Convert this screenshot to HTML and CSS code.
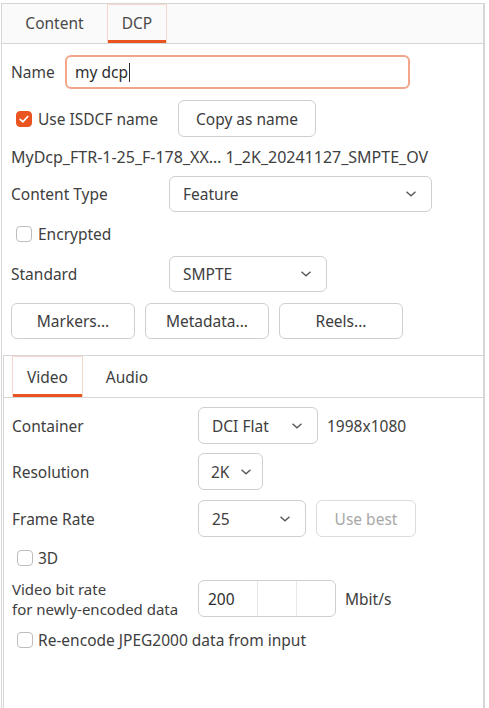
FILE: index.html
```html
<!DOCTYPE html>
<html>
<head>
<meta charset="utf-8">
<link rel="stylesheet" href="styles.css">
</head>
<body>
<div class="window">
  <div class="tabbar">
    <div class="tab t-content">Content</div>
    <div class="tab t-dcp active">DCP</div>
  </div>
  <div class="page">
    <div class="row r-name">
      <span class="label l-name">Name</span>
      <div class="entry focus"><span>my dcp</span><span class="caret"></span></div>
    </div>
    <div class="row r-isdcf">
      <label class="check"><span class="box checked"><svg viewBox="0 0 16 16" width="16" height="16"><path d="M4.2 8.3l2.6 2.6 5-5.4" fill="none" stroke="#fff" stroke-width="1.7" stroke-linecap="round" stroke-linejoin="round"/></svg></span>Use ISDCF name</label>
      <div class="button b-copy">Copy as name</div>
    </div>
    <div class="row r-text">MyDcp_FTR-1-25_F-178_XX… 1_2K_20241127_SMPTE_OV</div>
    <div class="row r-combo">
      <span class="label l-wide">Content Type</span>
      <div class="combo c-type"><span>Feature</span><svg class="chev" viewBox="0 0 12 8" width="12" height="8"><path d="M1.5 1.8l4.5 4 4.5-4" fill="none" stroke="#555" stroke-width="1.3"/></svg></div>
    </div>
    <div class="row r-check">
      <label class="check"><span class="box"></span>Encrypted</label>
    </div>
    <div class="row r-combo r-std">
      <span class="label l-wide">Standard</span>
      <div class="combo c-std"><span>SMPTE</span><svg class="chev" viewBox="0 0 12 8" width="12" height="8"><path d="M1.5 1.8l4.5 4 4.5-4" fill="none" stroke="#555" stroke-width="1.3"/></svg></div>
    </div>
    <div class="row r-buttons">
      <div class="button b-wide">Markers...</div>
      <div class="button b-wide">Metadata...</div>
      <div class="button b-wide">Reels...</div>
    </div>
  </div>
  <div class="notebook">
    <div class="tabbar2">
      <div class="tab2 t-video active">Video</div>
      <div class="tab2 t-audio">Audio</div>
    </div>
    <div class="page2">
      <div class="row r-c2">
        <span class="label l-in">Container</span>
        <div class="combo c-flat"><span>DCI Flat</span><svg class="chev" viewBox="0 0 12 8" width="12" height="8"><path d="M1.5 1.8l4.5 4 4.5-4" fill="none" stroke="#555" stroke-width="1.3"/></svg></div>
        <span class="after">1998x1080</span>
      </div>
      <div class="row r-c2 r-res">
        <span class="label l-in">Resolution</span>
        <div class="combo c-2k"><span>2K</span><svg class="chev" viewBox="0 0 12 8" width="12" height="8"><path d="M1.5 1.8l4.5 4 4.5-4" fill="none" stroke="#555" stroke-width="1.3"/></svg></div>
      </div>
      <div class="row r-c2 r-fr">
        <span class="label l-in">Frame Rate</span>
        <div class="combo c-25"><span>25</span><svg class="chev" viewBox="0 0 12 8" width="12" height="8"><path d="M1.5 1.8l4.5 4 4.5-4" fill="none" stroke="#555" stroke-width="1.3"/></svg></div>
        <div class="button b-best disabled">Use best</div>
      </div>
      <div class="row r-check2">
        <label class="check"><span class="box"></span>3D</label>
      </div>
      <div class="row r-bit">
        <span class="label l-in two"><span class="line">Video bit rate</span><span class="line">for newly-encoded data</span></span>
        <div class="spin"><span class="spin-text">200</span><span class="spin-btn"></span><span class="spin-btn"></span></div>
        <span class="after">Mbit/s</span>
      </div>
      <div class="row r-check3">
        <label class="check"><span class="box"></span>Re-encode JPEG2000 data from input</label>
      </div>
    </div>
  </div>
</div>
</body>
</html>
```

FILE: styles.css
```css
html, body {
  margin: 0;
  padding: 0;
  background: #ffffff;
}
body {
  font-family: "Noto Sans", "Open Sans", sans-serif;
  font-size: 15.5px;
  color: #404040;
}
.window {
  margin-top: 3px;
  margin-left: 1px;
  width: 481px;
  height: 705px;
  border-top: 1px solid #d6d6d6;
  border-left: 1px solid #d6d6d6;
  border-right: 2px solid #d6d6d6;
  display: flex;
  flex-direction: column;
}
.tabbar {
  height: 39px;
  background: #fafafa;
  border-bottom: 1px solid #d6d6d6;
  display: flex;
}
.tab {
  box-sizing: border-box;
  display: flex;
  align-items: center;
  justify-content: center;
  padding-bottom: 2px;
  color: #4a4a4a;
  border: 1px solid transparent;
  border-bottom: none;
}
.t-content { width: 105px; }
.t-dcp { width: 60px; }
.tab.active {
  border-color: #f8d8cc;
  box-shadow: inset 0 -3px 0 #e95420;
  background: #fafafa;
}
.page {
  padding: 11px 0 0 9px;
  display: flex;
  flex-direction: column;
}
.row {
  display: flex;
  align-items: center;
}
.label { flex: none; }
.l-name { width: 54px; }
.l-wide { width: 158px; }
.r-name { height: 34px; }
.entry {
  box-sizing: border-box;
  width: 345px;
  height: 34px;
  border: 2px solid #f4a68a;
  border-radius: 6px;
  display: flex;
  align-items: center;
  padding-left: 8px;
  color: #2e2e2e;
}
.caret {
  display: inline-block;
  width: 1px;
  height: 19px;
  background: #2e2e2e;
  margin-left: 1px;
}
.r-isdcf { height: 37px; margin-top: 11px; }
.check {
  display: flex;
  align-items: center;
  gap: 6px;
  margin-left: 5px;
}
.box {
  box-sizing: border-box;
  width: 16px;
  height: 16px;
  border: 1px solid #bdbdbd;
  border-radius: 4px;
  background: #fff;
  display: flex;
  align-items: center;
  justify-content: center;
}
.box svg { flex: none; }
.box.checked {
  background: #e95420;
  border-color: #e95420;
}
.button {
  box-sizing: border-box;
  height: 37px;
  border: 1px solid #cfcfcf;
  border-radius: 6px;
  background: #fff;
  display: flex;
  align-items: center;
  justify-content: center;
  color: #3d3d3d;
}
.b-copy { width: 138px; margin-left: 20px; }
.r-text { height: 22px; margin-top: 9px; font-size: 16px; letter-spacing: 0; }
.r-combo { height: 36px; margin-top: 8px; }
.combo {
  box-sizing: border-box;
  height: 36px;
  border: 1px solid #cfcfcf;
  border-radius: 6px;
  background: #fff;
  display: flex;
  align-items: center;
  justify-content: space-between;
  padding: 0 14px 0 13px;
}
.c-type { width: 263px; }
.c-std { width: 158px; }
.r-check { height: 24px; margin-top: 10px; }
.r-std { margin-top: 10px; }
.r-buttons { height: 36px; margin-top: 11px; gap: 10px; }
.b-wide { width: 124px; height: 36px; }
.notebook {
  margin-top: 16px;
  margin-left: 1px;
  border-top: 1px solid #d6d6d6;
  border-left: 1px solid #d6d6d6;
  flex: 1;
  display: flex;
  flex-direction: column;
}
.tabbar2 {
  height: 41px;
  border-bottom: 1px solid #d6d6d6;
  display: flex;
  padding-left: 8px;
}
.tab2 {
  box-sizing: border-box;
  display: flex;
  align-items: center;
  justify-content: center;
  border: 1px solid transparent;
  border-bottom: none;
}
.t-video { width: 71px; }
.t-audio { width: 88px; }
.tab2.active {
  border-color: #f8d8cc;
  box-shadow: inset 0 -3px 0 #e95420;
}
.page2 {
  padding: 9px 0 0 8px;
  display: flex;
  flex-direction: column;
}
.l-in { width: 186px; }
.r-c2 { height: 37px; }
.r-res { margin-top: 9px; }
.r-fr { margin-top: 10px; }
.c-flat { width: 120px; height: 37px; }
.c-2k { width: 65px; height: 37px; padding: 0 10px 0 12px; }
.c-25 { width: 108px; height: 37px; }
.after { margin-left: 9px; }
.b-best { width: 100px; margin-left: 10px; }
.disabled { color: #a8a8a8; border-color: #dcdcdc; }
.r-check2 { height: 24px; margin-top: 9px; }
.r-check2 .check, .r-check3 .check { margin-left: 5px; gap: 5px; }
.r-bit { height: 37px; margin-top: 10px; }
.two { display: flex; flex-direction: column; margin-top: 1px; }
.line { display: block; height: 20px; line-height: 21px; font-size: 15px; }
.spin {
  box-sizing: border-box;
  width: 138px;
  height: 37px;
  border: 1px solid #cfcfcf;
  border-radius: 6px;
  display: flex;
}
.spin-text {
  width: 59px;
  display: flex;
  align-items: center;
  padding-left: 9px;
  box-sizing: border-box;
  color: #2e2e2e;
}
.spin-btn {
  width: 39px;
  border-left: 1px solid #e8e8e8;
}
.r-bit .after { margin-left: 9px; }
.r-check3 { height: 24px; margin-top: 11px; }
```
